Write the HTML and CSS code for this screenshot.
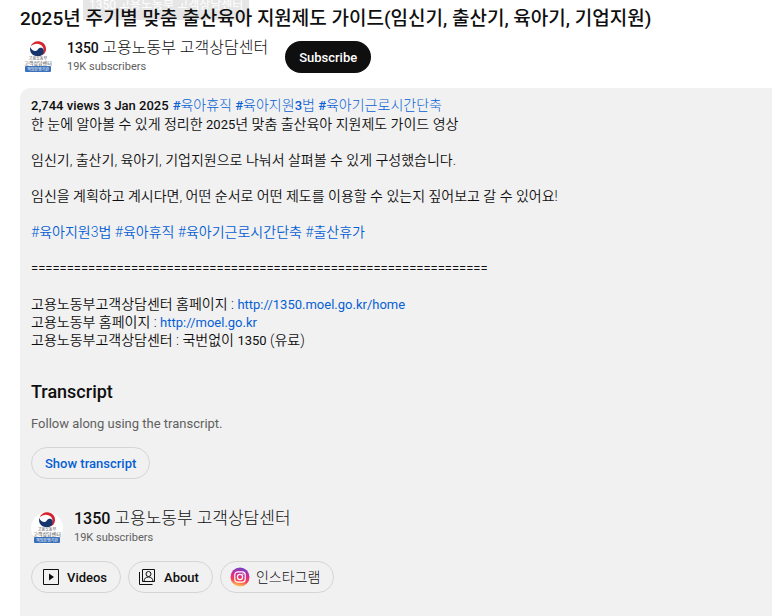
FILE: index.html
```html
<!DOCTYPE html>
<html lang="ko">
<head>
  <meta charset="UTF-8">
  <title>2025년 주기별 맞춤 출산육아 지원제도 가이드</title>
  <meta name="viewport" content="width=device-width, initial-scale=1.0">
  <link rel="stylesheet" href="styles.css">
</head>
<body>
  <!-- shared channel logo -->
  <svg class="defs" width="0" height="0" aria-hidden="true">
    <symbol id="logo" viewBox="0 0 32 32">
      <circle cx="16" cy="16" r="16" fill="#fff"/>
      <path d="M8.600 5.500C10 1.500 14 -.5 18 .5C22 1.500 24.500 5 24 9C23.500 12 21.500 14 19 14.500C21.500 12.500 22.500 8.500 20.500 5.500C18 2 12.500 1.500 8.600 5.500Z" fill="#d8232f"/>
      <path d="M8.300 6C7 11 10.500 15.300 16 15.300C20 15.300 22.800 12 21.500 8.500C20.500 6 17 6 15.800 8.500C14.500 11 10 10.500 8.300 6Z" fill="#17356d"/>
      <text x="16" y="19" class="logo-small">고용노동부</text>
      <text x="16" y="24" class="logo-name">고객상담센터</text>
      <rect x="3" y="25" width="26" height="6" rx="1" fill="#3a70ba"/>
      <text x="16" y="30" class="logo-band">책임운영기관</text>
    </symbol>
  </svg>

  <header class="watch-header">
    <div class="tooltip">1350 고용노동부 고객상담센터</div>
    <h1 class="title">2025년 주기별 맞춤 출산육아 지원제도 가이드(임신기, 출산기, 육아기, 기업지원)</h1>
    <div class="owner">
      <svg class="avatar"><use href="#logo"/></svg>
      <div class="owner-info">
        <div class="channel-name">1350 <span class="ko">고용노동부 고객상담센터</span></div>
        <div class="subscribers">19K subscribers</div>
      </div>
      <button class="subscribe">Subscribe</button>
    </div>
  </header>

  <main class="description">
    <p class="meta"><span class="views">2,744 views</span><span class="date">3 Jan 2025</span><a href="#">#<span class="ko">육아휴직</span></a> <a href="#">#<span class="ko">육아지원</span>3<span class="ko">법</span></a> <a href="#">#<span class="ko">육아기근로시간단축</span></a></p>
    <div class="text">
      <p>한 눈에 알아볼 수 있게 정리한 <span class="en">2025</span>년 맞춤 출산육아 지원제도 가이드 영상</p>
      <p>임신기, 출산기, 육아기, 기업지원으로 나눠서 살펴볼 수 있게 구성했습니다.</p>
      <p>임신을 계획하고 계시다면, 어떤 순서로 어떤 제도를 이용할 수 있는지 짚어보고 갈 수 있어요!</p>
      <p><a href="#">#육아지원3법</a> <a href="#">#육아휴직</a> <a href="#">#육아기근로시간단축</a> <a href="#">#출산휴가</a></p>
      <p><span class="en">================================================================</span></p>
      <p>고용노동부고객상담센터 홈페이지 : <a href="#" class="en">http://1350.moel.go.kr/home</a><br>
      고용노동부 홈페이지 : <a href="#" class="en">http://moel.go.kr</a><br>
      고용노동부고객상담센터 : 국번없이 <span class="en">1350</span> (유료)</p>
    </div>

    <section class="transcript">
      <h2>Transcript</h2>
      <p>Follow along using the transcript.</p>
      <button class="pill link-pill">Show transcript</button>
    </section>

    <section class="channel">
      <div class="channel-row">
        <svg class="avatar"><use href="#logo"/></svg>
        <div>
          <div class="channel-name large">1350 <span class="ko">고용노동부 고객상담센터</span></div>
          <div class="subscribers">19K subscribers</div>
        </div>
      </div>
      <div class="pills">
        <button class="pill">
          <svg class="icon" viewBox="0 0 20 20"><path d="M2.500 2.500h15v15h-15z" fill="none" stroke="#0f0f0f"/><path d="M8 6.500v7l5-3.500z" fill="#0f0f0f"/></svg>
          Videos
        </button>
        <button class="pill">
          <svg class="icon" viewBox="0 0 20 20" fill="none" stroke="#0f0f0f"><path d="M4.500 2.500h12v12h-12z"/><path d="M1.500 5v12.500h13"/><circle cx="10.500" cy="7" r="2.500"/><path d="M6 14.500c0-3 2-4.500 4.500-4.500s4.500 1.500 4.500 4.500"/></svg>
          About
        </button>
        <button class="pill">
          <svg class="icon" viewBox="0 0 20 20">
            <defs>
              <linearGradient id="insta" x1="0.600" y1="0" x2="0.400" y2="1">
                <stop offset="0" stop-color="#7040c8"/>
                <stop offset="0.400" stop-color="#d52a92"/>
                <stop offset="0.700" stop-color="#f4454e"/>
                <stop offset="1" stop-color="#ffd15c"/>
              </linearGradient>
            </defs>
            <circle cx="10" cy="10" r="9.500" fill="url(#insta)"/>
            <g fill="none" stroke="#fff" stroke-width="1.200"><rect x="4.800" y="4.800" width="10.400" height="10.400" rx="3"/><circle cx="10" cy="10" r="2.600"/></g>
            <circle cx="13" cy="7" r=".7" fill="#fff"/>
          </svg>
          <span class="ko">인스타그램</span>
        </button>
      </div>
    </section>
  </main>
</body>
</html>
```
FILE: styles.css
```css
* {
  box-sizing: border-box;
}
body {
  margin: 0;
  font-family: Roboto, "Noto Sans CJK KR", sans-serif;
  font-size: 13px;
  line-height: 18px;
  color: #0f0f0f;
  background: #fff;
}
h1, h2, p {
  margin: 0;
}
a {
  color: #065fd4;
  text-decoration: none;
}
button {
  font-family: inherit;
  cursor: pointer;
}
.defs {
  position: absolute;
}
.logo-small, .logo-name, .logo-band {
  text-anchor: middle;
  fill: #444;
  font-size: 4px;
}
.logo-name {
  font-size: 5px;
}
.logo-band {
  fill: #fff;
}
.watch-header {
  position: relative;
  padding: 7px 20px 12px;
}
.tooltip {
  position: absolute;
  z-index: -1;
  top: -8px;
  left: 83px;
  padding: 4px 6px 6px;
  font-size: 12px;
  color: #fff;
  background: #e6e6e6;
}
.title {
  font-size: 19px;
  line-height: 24px;
  font-weight: 500;
}
.owner {
  display: flex;
  align-items: center;
  margin-top: 7px;
}
.avatar {
  flex: none;
  width: 32px;
  height: 32px;
}
.owner .avatar {
  margin: 0 13px 0 2px;
}
.owner-info {
  margin-right: 17px;
}
.channel-name {
  font-size: 14px;
  line-height: 20px;
  font-weight: 500;
}
.channel-name.large {
  font-size: 16px;
}
.subscribers {
  font-size: 11px;
  line-height: 18px;
  color: #606060;
}
.subscribe {
  height: 32px;
  padding: 0 14px;
  border: none;
  border-radius: 16px;
  color: #fff;
  background: #0f0f0f;
  font-size: 13px;
  font-weight: 500;
}
.description {
  min-height: calc(100vh - 88px);
  margin-left: 20px;
  padding: 9px 11px;
  border-radius: 10px 0 0 0;
  background: #f1f1f1;
}
.meta {
  font-weight: 500;
}
.views, .date {
  margin-right: 4px;
}
.ko {
  font-size: 14px;
  font-weight: 300;
  line-height: 14px;
}
.channel-name .ko {
  font-size: 16px;
}
.channel-name.large .ko {
  font-size: 17px;
}
.text {
  font-size: 14px;
  font-weight: 350;
}
.en {
  font-size: 13px;
  font-weight: 400;
  line-height: 14px;
}
.text p + p {
  margin-top: 18px;
}
.transcript {
  margin-top: 31px;
}
.transcript h2 {
  font-size: 18px;
  line-height: 24px;
  font-weight: 500;
}
.transcript p {
  margin: 11px 0 14px;
  color: #606060;
}
.pill {
  display: flex;
  align-items: center;
  gap: 6px;
  height: 32px;
  padding: 0 13px 0 9px;
  border: 1px solid #d5d5d5;
  border-radius: 16px;
  background: transparent;
  color: #0f0f0f;
  font-size: 13px;
  font-weight: 500;
}
.link-pill {
  padding: 0 13px;
  color: #065fd4;
}
.icon {
  width: 20px;
  height: 20px;
}
.channel {
  margin-top: 30px;
}
.channel-row {
  display: flex;
  align-items: center;
  gap: 11px;
}
.pills {
  display: flex;
  gap: 7px;
  margin-top: 14px;
}
```
